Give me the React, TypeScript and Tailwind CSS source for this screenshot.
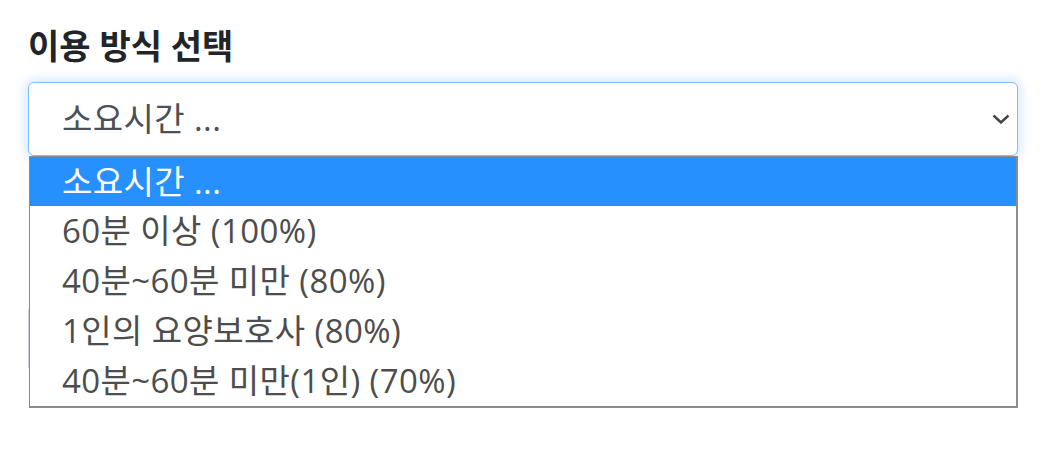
const options = [
  "소요시간 ...",
  "60분 이상 (100%)",
  "40분~60분 미만 (80%)",
  "1인의 요양보호사 (80%)",
  "40분~60분 미만(1인) (70%)",
];

const font = { fontFamily: '"Open Sans", "Noto Sans CJK KR", sans-serif' };

export default function App() {
  return (
    <div className="h-[454px] w-[1045px] bg-white" style={font}>
      <div className="relative ml-[28px] w-[990px] pt-[24px]">
        <h3 className="mb-[14px] text-[34px] leading-[44px] font-bold text-[#212529]">
          이용 방식 선택
        </h3>

        <div className="flex h-[74px] items-center justify-between rounded-[6px] border border-[#80bdff] bg-white pr-[7px] pl-[33px] shadow-[0_0_10px_4px_rgba(0,123,255,0.14)]">
          <span className="text-[33px] tracking-[0.4px] text-[#495057]">소요시간 ...</span>
          <svg width="18" height="10" viewBox="0 0 18 10" className="text-[#444]">
            <polyline points="1.5,1.5 9,8.5 16.5,1.5" fill="none" stroke="currentColor" strokeWidth="2.4" />
          </svg>
        </div>

        {/* field underneath, mostly hidden by the open list */}
        <div className="mt-[149px] h-[67px] rounded-[6px] border border-[#ced4da]" />

        <ul className="absolute top-[156px] right-0 left-[1px] border border-r-2 border-b-2 border-[#8c8c8c] bg-white">
          {options.map((opt, i) => (
            <li
              key={opt}
              className={
                i === 0
                  ? "flex h-[49px] items-center bg-[#2690ff] pl-[32px] text-[33px] tracking-[0.4px] text-white"
                  : "flex h-[50px] items-center pl-[32px] text-[33px] tracking-[0.4px] text-[#4d4d4d]"
              }
            >
              {opt}
            </li>
          ))}
        </ul>
      </div>
    </div>
  );
}
